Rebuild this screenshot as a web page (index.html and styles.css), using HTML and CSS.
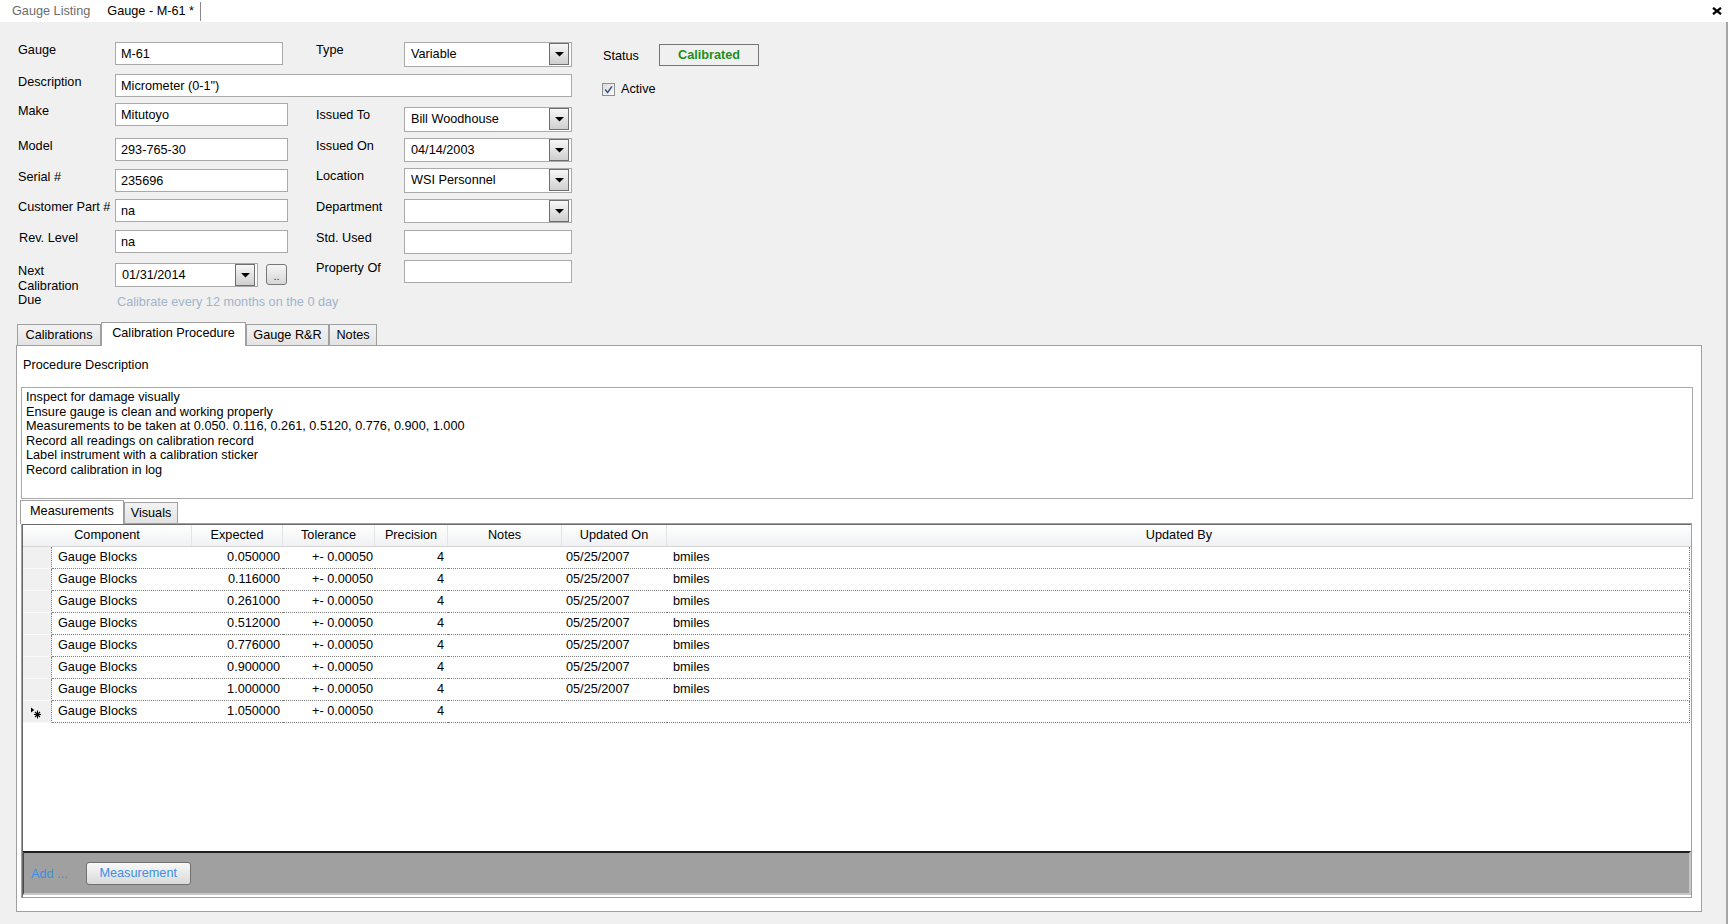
FILE: index.html
```html
<!DOCTYPE html>
<html>
<head>
<meta charset="utf-8">
<title>Gauge - M-61</title>
<link rel="stylesheet" href="styles.css">
</head>
<body>
<div class="doc-tabs">
  <div class="doc-tab">Gauge Listing</div>
  <div class="doc-tab doc-tab-active">Gauge - M-61 *</div>
  <div class="doc-close"><svg width="10" height="8" viewBox="0 0 10 8"><path d="M1 0.8 L9 7.2 M9 0.8 L1 7.2" stroke="#000" stroke-width="2.2"/></svg></div>
</div>
<div class="form">
  <div class="fields">
    <div class="lbl">Gauge</div>
    <div class="tb tb-short">M-61</div>
    <div class="lbl lbl-r">Type</div>
    <div class="cb"><span class="cb-text">Variable</span><span class="cb-btn"><svg width="9" height="5" viewBox="0 0 9 5"><polygon points="0,0 9,0 4.5,4.6" fill="#000"/></svg></span></div>
    <div class="st-lbl">Status</div>
    <div class="st-box">Calibrated</div>

    <div class="lbl">Description</div>
    <div class="tb tb-wide">Micrometer (0-1")</div>
    <div class="chk-row"><span class="chk"><svg width="11" height="11" viewBox="0 0 11 11"><path d="M2.2 5.6 L4.6 8.4 L9 2.4" fill="none" stroke="#3f5590" stroke-width="1.6"/></svg></span><span>Active</span></div>

    <div class="lbl">Make</div>
    <div class="tb">Mitutoyo</div>
    <div class="lbl lbl-r dn4">Issued To</div>
    <div class="cb dn4"><span class="cb-text">Bill Woodhouse</span><span class="cb-btn"><svg width="9" height="5" viewBox="0 0 9 5"><polygon points="0,0 9,0 4.5,4.6" fill="#000"/></svg></span></div>

    <div class="lbl">Model</div>
    <div class="tb">293-765-30</div>
    <div class="lbl lbl-r">Issued On</div>
    <div class="cb cb-24"><span class="cb-text">04/14/2003</span><span class="cb-btn"><svg width="9" height="5" viewBox="0 0 9 5"><polygon points="0,0 9,0 4.5,4.6" fill="#000"/></svg></span></div>

    <div class="lbl">Serial #</div>
    <div class="tb">235696</div>
    <div class="lbl lbl-r up1">Location</div>
    <div class="cb up1"><span class="cb-text">WSI Personnel</span><span class="cb-btn"><svg width="9" height="5" viewBox="0 0 9 5"><polygon points="0,0 9,0 4.5,4.6" fill="#000"/></svg></span></div>

    <div class="lbl">Customer Part #</div>
    <div class="tb">na</div>
    <div class="lbl lbl-r">Department</div>
    <div class="cb cb-24"><span class="cb-text"></span><span class="cb-btn"><svg width="9" height="5" viewBox="0 0 9 5"><polygon points="0,0 9,0 4.5,4.6" fill="#000"/></svg></span></div>

    <div class="lbl lbl-indent">Rev. Level</div>
    <div class="tb">na</div>
    <div class="lbl lbl-r">Std. Used</div>
    <div class="tb tb-24"></div>

    <div class="lbl lbl-due">Next<br>Calibration<br>Due</div>
    <div class="due">
      <div class="due-top">
        <div class="cb cb-date"><span class="cb-text">01/31/2014</span><span class="cb-btn"><svg width="9" height="5" viewBox="0 0 9 5"><polygon points="0,0 9,0 4.5,4.6" fill="#000"/></svg></span></div>
        <div class="dots-btn">..</div>
      </div>
      <div class="hint">Calibrate every 12 months on the 0 day</div>
    </div>
    <div class="lbl lbl-r up3">Property Of</div>
    <div class="tb up3"></div>
  </div>

  <div class="tabstrip">
    <div class="tab w-cal">Calibrations</div>
    <div class="tab tab-active w-proc">Calibration Procedure</div>
    <div class="tab w-rr">Gauge R&amp;R</div>
    <div class="tab w-notes">Notes</div>
  </div>
  <div class="panel">
    <div class="proc-lbl">Procedure Description</div>
    <div class="memo">Inspect for damage visually<br>Ensure gauge is clean and working properly<br>Measurements to be taken at 0.050. 0.116, 0.261, 0.5120, 0.776, 0.900, 1.000<br>Record all readings on calibration record<br>Label instrument with a calibration sticker<br>Record calibration in log</div>
    <div class="subtabs">
      <div class="tab tab-active w-meas">Measurements</div>
      <div class="tab w-vis">Visuals</div>
    </div>
    <div class="dgv">
      <div class="dgv-head">
        <div class="hc">Component</div>
        <div class="hc">Expected</div>
        <div class="hc">Tolerance</div>
        <div class="hc">Precision</div>
        <div class="hc">Notes</div>
        <div class="hc">Updated On</div>
        <div class="hc hc-last">Updated By</div>
      </div>
      <div class="dgv-row"><div class="c rh"></div><div class="c c-comp">Gauge Blocks</div><div class="c c-exp">0.050000</div><div class="c c-tol">+- 0.00050</div><div class="c c-prec">4</div><div class="c"></div><div class="c c-date">05/25/2007</div><div class="c c-by">bmiles</div></div>
      <div class="dgv-row"><div class="c rh"></div><div class="c c-comp">Gauge Blocks</div><div class="c c-exp">0.116000</div><div class="c c-tol">+- 0.00050</div><div class="c c-prec">4</div><div class="c"></div><div class="c c-date">05/25/2007</div><div class="c c-by">bmiles</div></div>
      <div class="dgv-row"><div class="c rh"></div><div class="c c-comp">Gauge Blocks</div><div class="c c-exp">0.261000</div><div class="c c-tol">+- 0.00050</div><div class="c c-prec">4</div><div class="c"></div><div class="c c-date">05/25/2007</div><div class="c c-by">bmiles</div></div>
      <div class="dgv-row"><div class="c rh"></div><div class="c c-comp">Gauge Blocks</div><div class="c c-exp">0.512000</div><div class="c c-tol">+- 0.00050</div><div class="c c-prec">4</div><div class="c"></div><div class="c c-date">05/25/2007</div><div class="c c-by">bmiles</div></div>
      <div class="dgv-row"><div class="c rh"></div><div class="c c-comp">Gauge Blocks</div><div class="c c-exp">0.776000</div><div class="c c-tol">+- 0.00050</div><div class="c c-prec">4</div><div class="c"></div><div class="c c-date">05/25/2007</div><div class="c c-by">bmiles</div></div>
      <div class="dgv-row"><div class="c rh"></div><div class="c c-comp">Gauge Blocks</div><div class="c c-exp">0.900000</div><div class="c c-tol">+- 0.00050</div><div class="c c-prec">4</div><div class="c"></div><div class="c c-date">05/25/2007</div><div class="c c-by">bmiles</div></div>
      <div class="dgv-row"><div class="c rh"></div><div class="c c-comp">Gauge Blocks</div><div class="c c-exp">1.000000</div><div class="c c-tol">+- 0.00050</div><div class="c c-prec">4</div><div class="c"></div><div class="c c-date">05/25/2007</div><div class="c c-by">bmiles</div></div>
      <div class="dgv-row"><div class="c rh rh-new"><svg width="13" height="12" viewBox="0 0 13 12"><path d="M1 0.5 L1 5.5 L4.2 3 Z" fill="#000"/><path d="M7.5 3.5 L7.5 11.5 M4 7.5 L11 7.5 M5 5 L10 10 M10 5 L5 10" stroke="#000" stroke-width="1.1"/></svg></div><div class="c c-comp">Gauge Blocks</div><div class="c c-exp">1.050000</div><div class="c c-tol">+- 0.00050</div><div class="c c-prec">4</div><div class="c"></div><div class="c c-date"></div><div class="c c-by"></div></div>
      <div class="dgv-fill"></div>
      <div class="dgv-bar">
        <span class="add-lbl">Add ...</span>
        <div class="bar-btn">Measurement</div>
      </div>
    </div>
  </div>
</div>
</body>
</html>
```
FILE: styles.css
```css
* { box-sizing: border-box; }
html, body { margin: 0; padding: 0; }
body {
  width: 1728px;
  height: 924px;
  overflow: hidden;
  background: #f0f0f0;
  font-family: "Liberation Sans", Arial, sans-serif;
  font-size: 12.7px;
  color: #000;
}

/* document tabs */
.doc-tabs {
  height: 22px;
  background: #fff;
  display: flex;
  align-items: flex-start;
}
.doc-tab {
  line-height: 22px;
  padding: 0 9px 0 12px;
  color: #6d6d6d;
  white-space: nowrap;
}
.doc-tab-active {
  color: #000;
  padding: 0 6px 0 8px;
  margin-top: 2px;
  line-height: 19px;
  border-right: 1px solid #8a8a8a;
}
.doc-close {
  margin-left: auto;
  padding: 7px 6px 0 0;
  line-height: 0;
}

/* form */
.form {
  height: 902px;
  padding: 20px 24px 0 16px;
  border-right: 2px solid #a5a5a5;
}
.fields {
  display: grid;
  margin-left: 2px;
  grid-template-columns: 97px 173px 28px 88px 168px 31px 56px 100px;
  grid-template-rows: 32px 29px 35px 31px 30px 31px 33px auto;
  align-items: start;
}
.lbl {
  grid-column-start: 1;
  padding-top: 1px;
  line-height: 15px;
  white-space: nowrap;
}
.lbl-r { grid-column-start: 4; }
.lbl-indent { padding-left: 1px; }
.lbl-due { line-height: 14.5px; }
.dn4 { margin-top: 4px; }
.up1 { margin-top: -1px; }
.up3 { margin-top: -3px; }

.tb {
  height: 23px;
  border: 1px solid #a9a9a9;
  background: #fff;
  padding: 2px 0 0 5px;
  line-height: 19px;
  white-space: nowrap;
}
.tb-short { width: 168px; }
.tb-wide { grid-column: 2 / 6; }
.tb-24 { height: 24px; }

.cb {
  height: 25px;
  border: 1px solid #a9a9a9;
  background: #fff;
  display: flex;
  align-items: flex-start;
}
.cb-24 { height: 24px; }
.cb-text {
  flex: 1;
  padding: 2px 0 0 6px;
  line-height: 19px;
  white-space: nowrap;
}
.cb-btn {
  width: 20px;
  height: 22px;
  margin-right: 2px;
  border: 1px solid #6f6f6f;
  background: linear-gradient(#f7f7f7, #cfcfcf);
  display: flex;
  align-items: center;
  justify-content: center;
}
.cb-date { width: 143px; height: 24px; }

.due { display: flex; flex-direction: column; }
.due-top { display: flex; align-items: flex-start; gap: 8px; }
.dots-btn {
  width: 21px;
  height: 21px;
  margin-top: 1px;
  border: 1px solid #777;
  border-radius: 3px;
  background: linear-gradient(#f6f6f6, #d6d6d6);
  text-align: center;
  font-size: 11px;
  line-height: 22px;
  color: #333;
}
.hint {
  margin-top: 8px;
  padding-left: 2px;
  line-height: 15px;
  color: #a0b4cc;
  white-space: nowrap;
}

.st-lbl {
  grid-column-start: 7;
  margin-top: 7px;
  line-height: 15px;
}
.st-box {
  height: 22px;
  margin-top: 2px;
  border: 1px solid #757575;
  text-align: center;
  font-weight: bold;
  color: #1e8f1e;
  line-height: 20px;
}
.chk-row {
  grid-column: 7 / 9;
  margin: 8px 0 0 -1px;
  display: flex;
  align-items: center;
  gap: 6px;
  line-height: 15px;
}
.chk {
  width: 13px;
  height: 13px;
  border: 1px solid #8e8f8f;
  background: linear-gradient(135deg, #dcdcdc, #fbfbfb);
  display: flex;
  align-items: center;
  justify-content: center;
}

/* tabs */
.tabstrip {
  display: flex;
  align-items: flex-end;
  height: 23px;
  margin-top: 12px;
  padding-left: 1px;
}
.tab {
  height: 21px;
  border: 1px solid #a0a0a0;
  border-bottom: none;
  background: linear-gradient(#f3f3f3, #e3e3e3);
  text-align: center;
  line-height: 20px;
  white-space: nowrap;
}
.tab-active {
  height: 24px;
  margin-bottom: -1px;
  background: #fff;
  position: relative;
  z-index: 1;
}
.w-cal { width: 84px; }
.w-proc { width: 145px; }
.w-rr { width: 83px; }
.w-notes { width: 48px; }
.w-meas { width: 104px; }
.w-vis { width: 54px; }

.panel {
  border: 1px solid #a0a0a0;
  background: #fff;
  padding: 12px 8px 13px 4px;
}
.proc-lbl {
  margin-left: 2px;
  line-height: 15px;
}
.memo {
  margin-top: 14px;
  height: 112px;
  border: 1px solid #a9a9a9;
  padding: 2px 0 0 4px;
  line-height: 14.6px;
}
.subtabs {
  display: flex;
  align-items: flex-end;
  height: 23px;
  margin: 1px 0 0 -1px;
}

/* data grid */
.dgv {
  height: 375px;
  margin-right: 1px;
  border: 1px solid #a0a0a0;
  padding: 1px 0 0 1px;
  box-shadow: inset 1px 1px 0 #696969;
  background: #fff;
  display: flex;
  flex-direction: column;
}
.dgv-head {
  display: grid;
  grid-template-columns: 169px 91px 92px 73px 114px 105px 1fr;
  height: 22px;
  border-bottom: 1px solid #d5d5d5;
  background: linear-gradient(#ffffff, #f0f1f3);
}
.hc {
  text-align: center;
  line-height: 21px;
  border-right: 1px solid #e3e4e6;
  white-space: nowrap;
}
.hc-last { border-right: none; }
.dgv-row {
  display: grid;
  grid-template-columns: 29px 140px 91px 92px 73px 114px 105px 1fr;
  height: 22px;
  margin-right: 1px;
}
.c {
  border-bottom: 1px dotted #808080;
  line-height: 21px;
  white-space: nowrap;
  overflow: hidden;
}
.rh {
  background: #f0f0f0;
  border-right: 1px dotted #808080;
  border-bottom: 1px solid #fafafa;
}
.rh-new {
  padding: 6px 0 0 7px;
  line-height: 0;
}
.c-comp { padding-left: 6px; }
.c-exp { text-align: right; padding-right: 3px; }
.c-tol { text-align: right; padding-right: 2px; }
.c-prec { text-align: right; padding-right: 4px; }
.c-date { padding-left: 4px; }
.c-by { padding-left: 6px; border-right: 1px dotted #808080; }
.dgv-fill { flex: 1; }
.dgv-bar {
  height: 44px;
  margin-bottom: 2px;
  background: #a0a0a0;
  border-top: 2px solid #1f1f1f;
  border-left: 1px solid #4a4a4a;
  border-right: 2px solid #c6c6c6;
  border-bottom: 2px solid #c6c6c6;
  display: flex;
  align-items: center;
  padding: 1px 0 0 7px;
}
.add-lbl {
  color: #3d8fe8;
  margin-right: 18px;
  white-space: nowrap;
}
.bar-btn {
  width: 105px;
  height: 23px;
  border: 1px solid #707070;
  border-radius: 3px;
  background: linear-gradient(#f8f8f8, #dadada);
  color: #3d8fe8;
  text-align: center;
  line-height: 21px;
}
```
